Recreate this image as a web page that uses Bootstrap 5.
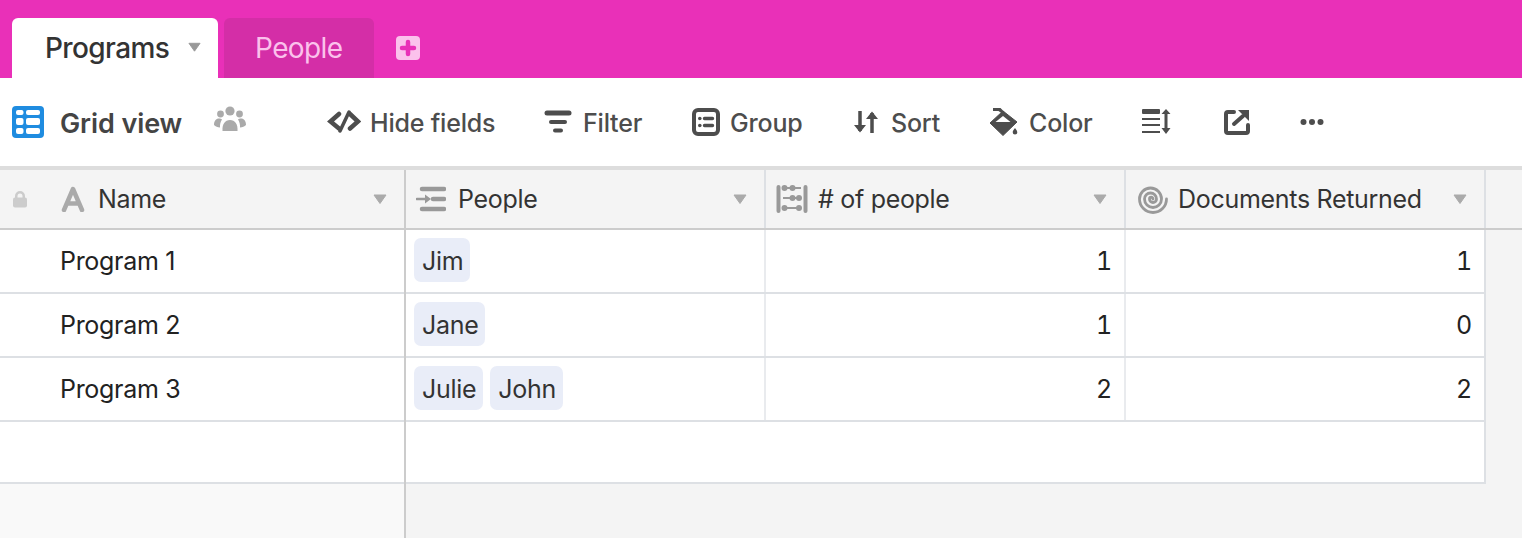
<!DOCTYPE html>
<html lang="en">
<head>
<meta charset="utf-8">
<title>Programs</title>
<link href="https://cdn.jsdelivr.net/npm/bootstrap@5.3.0/dist/css/bootstrap.min.css" rel="stylesheet">
<style>
html,body{height:538px;overflow:hidden}
body{font-family:Inter,"Liberation Sans",sans-serif;font-size:25px;color:#222;background:#f4f4f4;letter-spacing:-.3px}
.tabbar{height:78px;background:#e930b8;padding:18px 0 0 12px}
.tb-tab{height:60px;border-radius:6px 6px 0 0;font-size:28px;letter-spacing:-.6px}
.tb-active{width:206px;background:#fff;color:#333;padding-left:33px;font-weight:500}
.tb-other{width:150px;margin-left:6px;background:#d42ea7;color:#fbc1ec;padding-left:31px}
.tb-caret{margin-left:auto;margin-right:17px;margin-top:-2px}
.tb-add{margin-left:22px;margin-top:18px}
.toolbar{height:88px;background:#fff;color:#4d4d4d;font-weight:500;padding-left:12px;letter-spacing:-.2px}
.tool{height:88px;padding-top:4px;display:flex;align-items:center;white-space:nowrap;flex:none}
.tool svg{margin-top:-4px}
.t-grid{width:48px}.t-name{width:154px;font-weight:600;font-size:27px;color:#444;letter-spacing:-.1px}
.t-people{width:113px}.t-hide{width:217px}.t-filter{width:148px}.t-group{width:162px}
.t-sort{width:135px}.t-color{width:153px}.t-rows{width:82px}.t-share{width:76px}
.tool svg.ic-people{margin-top:-10px}.ic-hide{margin-right:9px}.ic-filter{margin-right:11px}.ic-group{margin-right:10px}.ic-sort{margin-right:13px}.ic-color{margin-right:10px}
.topline{height:4px;background:#ddd}
.panes{height:368px}
.pane-left{width:406px;background:#f9f9f9;border-right:2px solid #ccc;flex:none}
.pane-right{flex:1;background:#f4f4f4;min-width:0}
.hrow{height:60px;display:flex;align-items:stretch;background:#f4f4f4;border-bottom:2px solid #ccc;color:#333}
.hrow span{margin-top:2px}
.drow{height:64px;display:flex;background:#fff;border-bottom:2px solid #dde0e4}
.drow.emptyrow{height:62px}
.rrow{width:1080px}
.hrow-left{padding-left:12px;align-items:center}
.wcol{width:360px;flex:none;border-right:2px solid #e9ebee;display:flex;align-items:center}
.hrow .wcol{border-right-color:#dde0e4;padding-left:8px}
.wcol.lastc{border-right-color:#dde0e4}
.wfull{width:1080px;flex:none;border-right:2px solid #dde0e4}
.numcell{justify-content:flex-end;padding-right:12px;padding-top:2px;font-variant-numeric:tabular-nums}
.chipcell{padding-left:8px;gap:7px}
.chip{height:44px;line-height:46px;margin-top:-2px;background:#e9edf8;border-radius:7px;padding:0 7px 0 8px;color:#333}
.namecell{padding-left:60px;padding-top:2px;align-items:center}
.hcaret{margin-left:auto;margin-right:17px}
.ic-lock{margin-right:33px}
.ic-a{margin-right:13px}
.ic-links{margin-left:2px;margin-right:12px}
.ic-abacus{margin-left:2px;margin-right:10px}
.ic-spiral{margin-left:4px;margin-right:10px}
</style>
</head>
<body>
<div class="tabbar d-flex align-items-start">
  <div class="tb-tab tb-active d-flex align-items-center">Programs
    <svg class="tb-caret" width="13" height="10" viewBox="0 0 14 10"><path d="M1 1h12L7 9.500z" fill="#999" stroke="#999" stroke-linejoin="round"/></svg>
  </div>
  <div class="tb-tab tb-other d-flex align-items-center">People</div>
  <svg class="tb-add" width="24" height="24" viewBox="0 0 24 24"><rect width="24" height="24" rx="4" fill="#fbc1ec"/><path d="M12 6v12M6 12h12" stroke="#e930b8" stroke-width="4.500" stroke-linecap="round"/></svg>
</div>

<div class="toolbar d-flex">
  <div class="tool t-grid"><svg width="32" height="32" viewBox="0 0 32 32"><rect width="32" height="32" rx="4" fill="#1f8ce0"/><g fill="#fff"><rect x="4" y="4" width="7.500" height="5" rx="2"/><rect x="14" y="4" width="14" height="5" rx="2"/><rect x="4" y="12" width="7.500" height="7" rx="2"/><rect x="14" y="12" width="14" height="7" rx="2"/><rect x="4" y="22" width="7.500" height="6" rx="2"/><rect x="14" y="22" width="14" height="6" rx="2"/></g></svg></div>
  <div class="tool t-name">Grid view</div>
  <div class="tool t-people"><svg class="ic-people" width="32" height="26" viewBox="0 0 32 26" fill="#aaa"><circle cx="16" cy="5" r="4.600"/><circle cx="6.500" cy="8" r="3.400"/><circle cx="25.500" cy="8" r="3.400"/><path d="M8.500 25c-.5-7 2.500-11 7.500-11s8 4 7.500 11z"/><path d="M0 19c0-4 2-6.500 5-6.500 1.300 0 2.200.3 3 1-1.500 2-2.200 5-2 8-2.500-.3-4.500-1-6-2.500zM32 19c0-4-2-6.500-5-6.500-1.300 0-2.200.3-3 1 1.500 2 2.200 5 2 8 2.500-.3 4.500-1 6-2.500z"/></svg></div>
  <div class="tool t-hide"><svg class="ic-hide" width="34" height="24" viewBox="0 0 34 24" fill="none" stroke="#4d4d4d" stroke-linecap="round" stroke-linejoin="miter"><path d="M12 4 3.500 11.500 12 18.500M23 4l8 7.500-8 7" stroke-width="4.500"/><path d="M22 2 13 21" stroke-width="3.500"/></svg>Hide fields</div>
  <div class="tool t-filter"><svg class="ic-filter" width="28" height="24" viewBox="0 0 28 24" stroke="#4d4d4d" stroke-linecap="round" fill="none"><path d="M3 3h22" stroke-width="5"/><path d="M7 12h14" stroke-width="4"/><path d="M11 20.500h6" stroke-width="4"/></svg>Filter</div>
  <div class="tool t-group"><svg class="ic-group" width="28" height="28" viewBox="0 0 28 28" fill="none" stroke="#4d4d4d"><rect x="2" y="2" width="24" height="24" rx="4" stroke-width="4"/><path d="M12.500 10.500h8M12.500 17.500h8" stroke-width="3.400" stroke-linecap="round"/><circle cx="7.800" cy="10.500" r="1.800" fill="#4d4d4d" stroke="none"/><circle cx="7.800" cy="17.500" r="1.800" fill="#4d4d4d" stroke="none"/></svg>Group</div>
  <div class="tool t-sort"><svg class="ic-sort" width="24" height="24" viewBox="0 0 24 24" fill="none" stroke="#4d4d4d" stroke-width="3.500" stroke-linejoin="miter"><path d="M6 1v20M18 23V3"/><path d="M0 15h12l-6 7.500zM12 9h12L18 1.500z" fill="#4d4d4d" stroke="none"/></svg>Sort</div>
  <div class="tool t-color"><svg class="ic-color" width="30" height="28" viewBox="0 0 30 28" fill="#4d4d4d"><path d="M14 3 1 15 14 27.500 28 14z" stroke="#4d4d4d" stroke-linejoin="round"/><path d="M4 0h7.500L16 4.500 13 5.500 9.500 3H4z"/><path d="M14 8 6.500 14H21.500z" fill="#fff"/><path d="M26 20c1.300 1.800 2.300 3 2.300 4.300a2.300 2.300 0 0 1-4.600 0c0-1.300 1-2.500 2.300-4.300z"/></svg>Color</div>
  <div class="tool t-rows"><svg width="30" height="26" viewBox="0 0 30 26" fill="#4d4d4d"><rect y="0" width="18" height="5" rx="1"/><rect y="9" width="18" height="2"/><rect y="15" width="18" height="2"/><rect y="22" width="18" height="2"/><path d="M24 0l4.500 5H25.500v14h3L24 25l-4.500-6h3V5h-3z"/></svg></div>
  <div class="tool t-share"><svg width="26" height="26" viewBox="0 0 26 26" fill="none" stroke="#4d4d4d" stroke-width="4" stroke-linecap="round" stroke-linejoin="round"><path d="M10 3H4a2 2 0 0 0-2 2v17a2 2 0 0 0 2 2h18a2 2 0 0 0 2-2v-6"/><path d="M10 15 19 7"/><path d="M14 1h11v11z" fill="#4d4d4d" stroke="none"/></svg></div>
  <div class="tool"><svg width="24" height="8" viewBox="0 0 24 8" fill="#4d4d4d"><circle cx="3.500" cy="4" r="3"/><circle cx="12" cy="4" r="3"/><circle cx="20.500" cy="4" r="3"/></svg></div>
</div>

<div class="topline"></div>

<div class="panes d-flex">
  <div class="pane-left">
    <div class="hrow hrow-left">
      <svg class="ic-lock" width="16" height="18" viewBox="0 0 16 18" fill="#ccc"><path d="M3 8V6a5 5 0 0 1 10 0v2h-2.500V6a2.500 2.500 0 0 0-5 0v2z"/><rect x="1" y="7.500" width="14" height="10" rx="2"/></svg>
      <svg class="ic-a" width="24" height="26" viewBox="0 0 24 26" fill="none" stroke="#aaa" stroke-width="4.500" stroke-linecap="round" stroke-linejoin="round"><path d="M3 24 12 3l9 21M6.500 17.500h11"/></svg>
      <span>Name</span>
      <svg class="hcaret" width="14" height="10" viewBox="0 0 14 10"><path d="M1 1h12L7 9.500z" fill="#aaa" stroke="#aaa" stroke-linejoin="round"/></svg>
    </div>
    <div class="drow namecell"><span>Program 1</span></div>
    <div class="drow namecell"><span>Program 2</span></div>
    <div class="drow namecell"><span>Program 3</span></div>
    <div class="drow emptyrow"></div>
  </div>
  <div class="pane-right">
    <div class="hrow">
      <div class="wcol">
        <svg class="ic-links" width="30" height="28" viewBox="0 0 30 28" fill="none" stroke="#999" stroke-linecap="round"><path d="M6 4h22M17 14h11M6 24h22" stroke-width="4.500"/><path d="M1 14h10" stroke-width="2.600"/><path d="M9 9.500 15 14l-6 4.500z" fill="#999" stroke="none"/></svg>
        <span>People</span>
        <svg class="hcaret" width="14" height="10" viewBox="0 0 14 10"><path d="M1 1h12L7 9.500z" fill="#aaa" stroke="#aaa" stroke-linejoin="round"/></svg>
      </div>
      <div class="wcol">
        <svg class="ic-abacus" width="32" height="28" viewBox="0 0 32 28" fill="none" stroke="#999"><path d="M2.500 2v24M29.500 2v24" stroke-width="4" stroke-linecap="round"/><path d="M7 3h18M7 13h18M7 23h18" stroke-width="2"/><g fill="#999" stroke="none"><circle cx="8.500" cy="3" r="3"/><circle cx="16.500" cy="3" r="3"/><circle cx="16.500" cy="13" r="3"/><circle cx="23" cy="13" r="3"/><circle cx="8.500" cy="23" r="3"/><circle cx="23" cy="23" r="3"/></g></svg>
        <span># of people</span>
        <svg class="hcaret" width="14" height="10" viewBox="0 0 14 10"><path d="M1 1h12L7 9.500z" fill="#aaa" stroke="#aaa" stroke-linejoin="round"/></svg>
      </div>
      <div class="wcol">
        <svg class="ic-spiral" width="30" height="30" viewBox="0 0 30 30" fill="none" stroke="#999" stroke-width="2.800" stroke-linecap="round"><path d="M15 15A1.750 1.750 0 0 0 11.500 15A3.500 3.500 0 0 0 18.500 15A6 6 0 0 0 6.500 15A8.500 8.500 0 0 0 23.500 15A11 11 0 0 0 1.500 15A13.500 13.500 0 0 0 28.500 15"/></svg>
        <span>Documents Returned</span>
        <svg class="hcaret" width="14" height="10" viewBox="0 0 14 10"><path d="M1 1h12L7 9.500z" fill="#aaa" stroke="#aaa" stroke-linejoin="round"/></svg>
      </div>
    </div>
    <div class="drow rrow"><div class="wcol chipcell"><span class="chip">Jim</span></div><div class="wcol numcell"><span>1</span></div><div class="wcol numcell lastc"><span>1</span></div></div>
    <div class="drow rrow"><div class="wcol chipcell"><span class="chip">Jane</span></div><div class="wcol numcell"><span>1</span></div><div class="wcol numcell lastc"><span>0</span></div></div>
    <div class="drow rrow"><div class="wcol chipcell"><span class="chip">Julie</span><span class="chip">John</span></div><div class="wcol numcell"><span>2</span></div><div class="wcol numcell lastc"><span>2</span></div></div>
    <div class="drow emptyrow rrow"><div class="wfull"></div></div>
  </div>
</div>
</body>
</html>
